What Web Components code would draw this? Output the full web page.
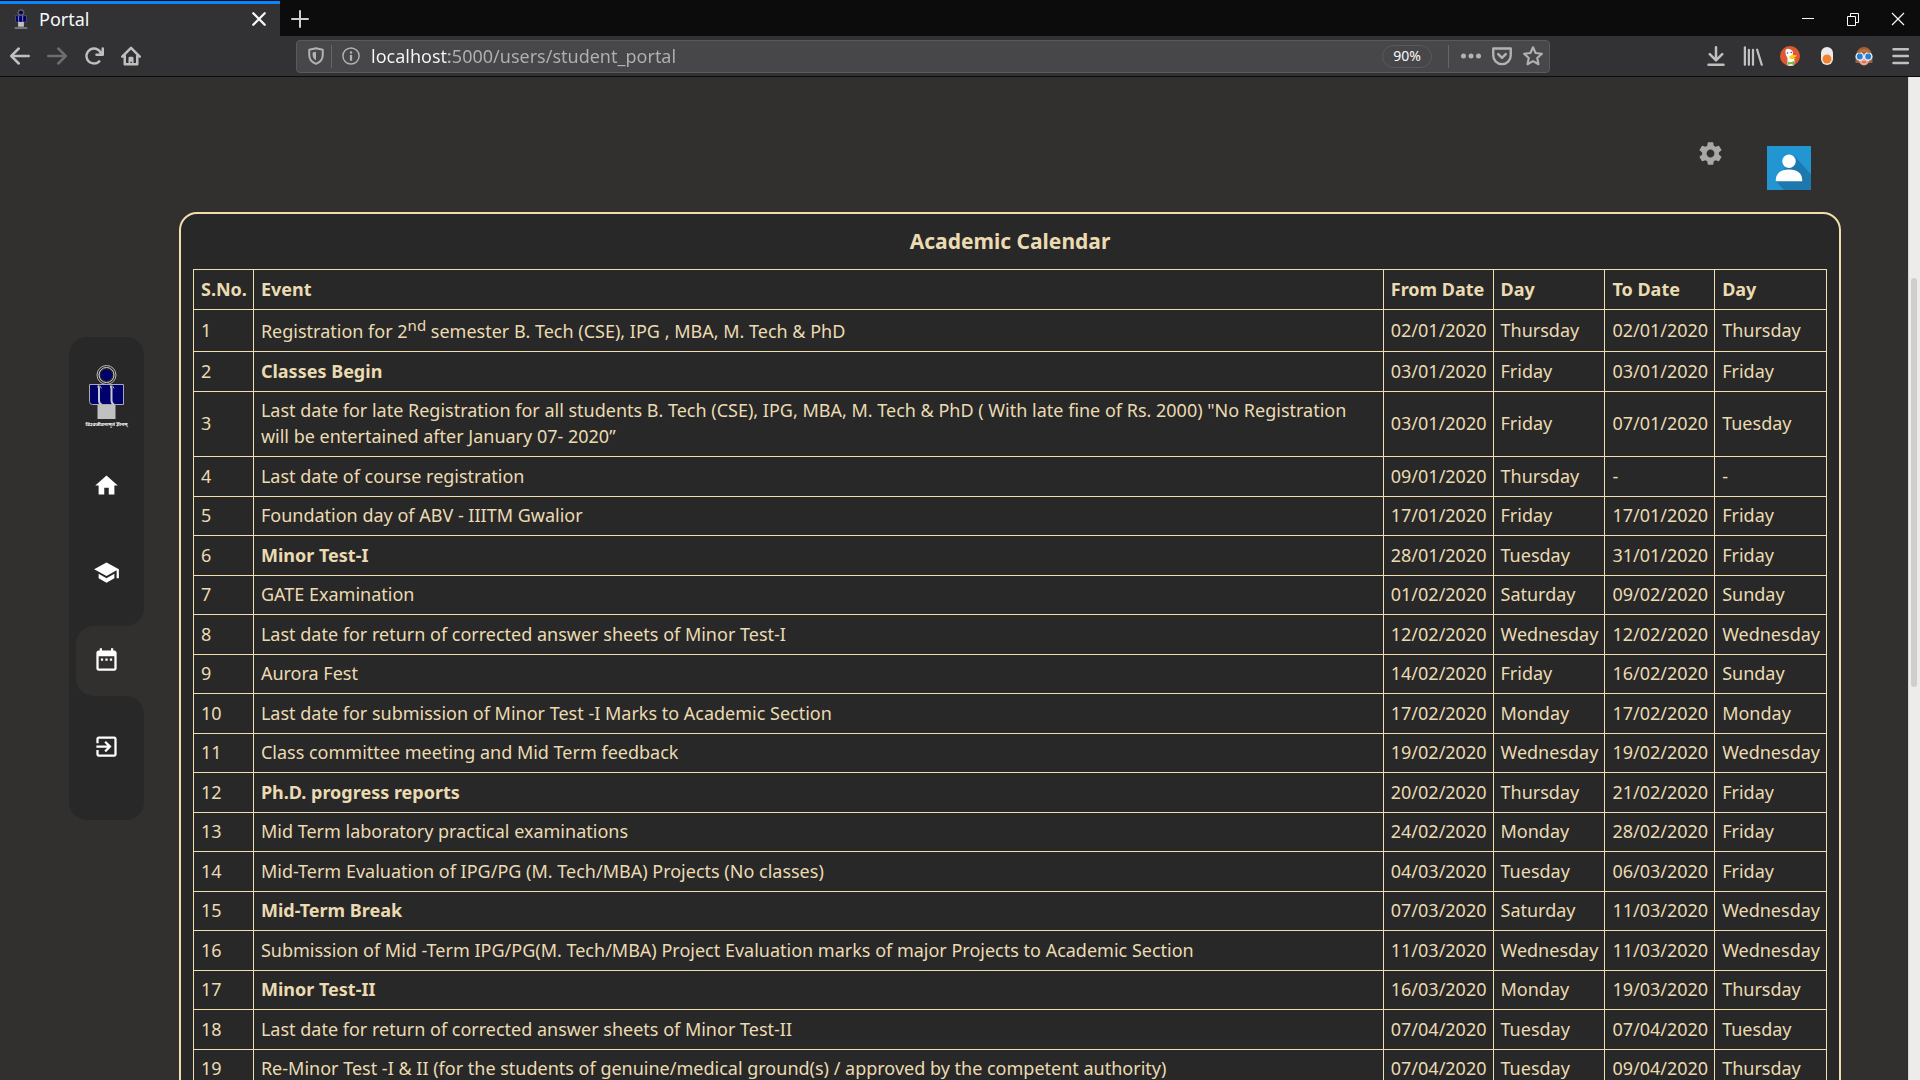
<!DOCTYPE html>
<html lang="en">
<head>
<meta charset="utf-8">
<title>Portal</title>
<style>
  html, body { margin: 0; height: 100%; overflow: hidden; }
  body {
    --page: #32302f; --panel: #282828; --ink: #ebdbb2; --line: #f0deae;
    font-family: "Noto Sans", "Open Sans", sans-serif;
    background: var(--page);
  }
</style>
</head>
<body>
<browser-window>
  <browser-tabs slot="tabs"></browser-tabs>
  <browser-toolbar slot="toolbar"></browser-toolbar>
  <portal-page slot="page">
    <side-nav slot="nav"></side-nav>
    <user-tools slot="tools"></user-tools>
    <academic-calendar slot="content"></academic-calendar>
  </portal-page>
</browser-window>

<script>
const define = (name, html, setup) => customElements.define(name, class extends HTMLElement {
  constructor() {
    super();
    const t = document.createElement('template');
    t.innerHTML = html;
    this.attachShadow({ mode: 'open' }).append(t.content.cloneNode(true));
    if (setup) setup(this.shadowRoot, this);
  }
});

const CREST = `
  <circle cx="20.5" cy="11" r="9.5" fill="#282828" stroke="#b9b9b9" stroke-width="1"/>
  <circle cx="20.5" cy="11" r="7.5" fill="#222" stroke="#d6d6d6" stroke-width="1"/>
  <circle cx="20.5" cy="11" r="5.5" fill="#00006c"/>
  <path d="M11.500 40h18v15h-18z" fill="#c0c0c0"/>
  <path d="M3.500 20.500h34v20h-31q-3 0-3-3z" fill="#00006c" stroke="#a9a9b4" stroke-width="1"/>
  <path d="M11.500 22.500q1.500 0 1.500 2v12q0 3 2.500 4" fill="none" stroke="#c8c8d0" stroke-width="2"/>
  <path d="M24 22.500q1.500 0 1.500 2v12q0 3 2.500 4" fill="none" stroke="#c8c8d0" stroke-width="2"/>
  <path d="M12 21.500q3 0 3.500 3M24.500 21.500q3 0 3.500 3" fill="none" stroke="#a9a9b4" stroke-width="1"/>`;

const ICONS = {
  back: ['0 0 16 16', '<path d="M15 7H3.414l4.293-4.293a1 1 0 0 0-1.414-1.414l-6 6a1 1 0 0 0 0 1.414l6 6a1 1 0 0 0 1.414-1.414L3.414 9H15a1 1 0 0 0 0-2z"/>'],
  forward: ['0 0 16 16', '<path transform="matrix(-1 0 0 1 16 0)" d="M15 7H3.414l4.293-4.293a1 1 0 0 0-1.414-1.414l-6 6a1 1 0 0 0 0 1.414l6 6a1 1 0 0 0 1.414-1.414L3.414 9H15a1 1 0 0 0 0-2z"/>'],
  reload: ['0 0 16 16', '<path d="M15 1a1 1 0 0 0-1 1v2.418A6.995 6.995 0 1 0 8 15a6.954 6.954 0 0 0 4.950-2.050 1 1 0 0 0-1.414-1.414A5.019 5.019 0 1 1 12.549 6H10a1 1 0 0 0 0 2h5a1 1 0 0 0 1-1V2a1 1 0 0 0-1-1z"/>'],
  home: ['0 0 16 16', '<path fill="none" stroke="currentColor" stroke-width="2" stroke-linejoin="round" stroke-linecap="round" d="M1 8.500l7-7 7 7M3 8v6.500h10V8"/><path d="M6 14.500V9.500q0-1 1-1h2q1 0 1 1v5H8.800v-2H7.500v2z"/>'],
  shield: ['0 0 16 16', '<path fill="none" stroke="currentColor" stroke-width="1.800" stroke-linejoin="round" d="M8 1.200L14 2.500V7c0 4-2.500 6.500-6 8-3.500-1.500-6-4-6-8V2.500z"/><path d="M8 4.200v7.500C6 10.500 5 9 5 7V4.800z"/>'],
  info: ['0 0 16 16', '<circle cx="8" cy="8" r="7.200" fill="none" stroke="currentColor" stroke-width="1.300"/><circle cx="8" cy="4.800" r="1.100"/><path d="M7 7h2v5.200H7z"/>'],
  dots: ['0 0 16 16', '<circle cx="2" cy="8" r="2"/><circle cx="8" cy="8" r="2"/><circle cx="14" cy="8" r="2"/>'],
  pocket: ['0 0 16 16', '<path fill="none" stroke="currentColor" stroke-width="1.900" stroke-linejoin="round" d="M1 2h14v5.500a7 7 0 0 1-14 0z"/><path fill="none" stroke="currentColor" stroke-width="2" stroke-linecap="round" stroke-linejoin="round" d="M5 6.500l3 3 3-3"/>'],
  star: ['0 0 16 16', '<path fill="none" stroke="currentColor" stroke-width="1.700" stroke-linejoin="round" d="M8 1l2.100 4.600 5 .6-3.700 3.400 1 5L8 12.100l-4.400 2.500 1-5L.900 6.200l5-.6z"/>'],
  download: ['0 0 16 16', '<path fill="none" stroke="currentColor" stroke-width="2" stroke-linecap="round" stroke-linejoin="round" d="M8 1v10M3 6.500l5 5 5-5M2 15h12"/>'],
  library: ['0 0 16 16', '<path fill="none" stroke="currentColor" stroke-width="1.800" stroke-linecap="round" d="M1.500 1v14M4.700 3v12M8 3v12M11.300 3l3.700 12"/>'],
  duck: ['0 0 20 20', '<circle cx="10" cy="10" r="10" fill="#de5833"/><path d="M5.500 4.500q1-2.500 3.500-1.500 3.500.500 4 3.500l-.5 5q2 1 2 3l-.5 4.800q-3.500 1-6.500.200L7.500 12Q5 9 5.500 4.500z" fill="#fff"/><circle cx="7.500" cy="7" r=".8" fill="#2d4f8e"/><circle cx="11.200" cy="6.500" r=".8" fill="#2d4f8e"/><path d="M9.500 10q3-1.500 7.500-.5-1 1.700-3.500 2l2.500.7q-2.500 1.600-6.500.3z" fill="#fdd20a"/><path d="M8 15.500l2.500 1 3.500-1.500v4l-3.500-1L8 19z" fill="#65bc46"/>'],
  toggle: ['0 0 20 20', '<rect x="4" y="1" width="12" height="18" rx="6" fill="#ececec"/><circle cx="10" cy="13" r="4.500" fill="#f5812e"/>'],
  face: ['0 0 20 20', '<path d="M1.500 17Q1 1 10 1t8.500 16z" fill="#9c6136"/><path d="M5 10h10v5q-1 4-5 4.500Q6 19 5 15z" fill="#f0a58c"/><path d="M8 15.500h4v1.500H8z" fill="#c96a5a"/><circle cx="5.800" cy="10.500" r="3.700" fill="#2a7fd4" stroke="#e6f2ff" stroke-width="1.400"/><circle cx="14.200" cy="10.500" r="3.700" fill="#2a7fd4" stroke="#e6f2ff" stroke-width="1.400"/><path d="M3 6q7-6 14 0l-1 1.500q-6-3-12 0z" fill="#b5713d"/>'],
  menu: ['0 0 16 16', '<path fill="none" stroke="currentColor" stroke-width="2" stroke-linecap="round" d="M2 2.500h11.500M2 8h11.500M2 13.500h11.500"/>'],
  plus: ['0 0 18 18', '<path fill="none" stroke="currentColor" stroke-width="2" stroke-linecap="round" d="M9 1v16M1 9h16"/>'],
  cross: ['0 0 14 14', '<path fill="none" stroke="currentColor" stroke-width="2" stroke-linecap="round" d="M2 2l10 10M12 2L2 12"/>'],
  wmin: ['0 0 14 14', '<path d="M1 6h12v1H1z"/>'],
  wmax: ['0 0 14 14', '<path fill="none" stroke="currentColor" d="M1.500 4.500h8v9h-8zM4.500 4.500v-3h8v9h-3"/>'],
  wclose: ['0 0 14 14', '<path fill="none" stroke="currentColor" stroke-width="1.200" d="M1 1l12 12M13 1L1 13"/>'],
  mhome: ['0 0 24 24', '<path d="M10 20v-6h4v6h5v-8h3L12 3 2 12h3v8z"/>'],
  mschool: ['0 0 24 24', '<path d="M5 13.180v4L12 21l7-3.820v-4L12 17l-7-3.820zM12 3L1 9l11 6 9-4.910V17h2V9L12 3z"/>'],
  mdate: ['0 0 24 24', '<path d="M9 11H7v2h2v-2zm4 0h-2v2h2v-2zm4 0h-2v2h2v-2zm2-7h-1V2h-2v2H8V2H6v2H5c-1.110 0-1.990.9-1.990 2L3 20c0 1.100.89 2 2 2h14c1.100 0 2-.9 2-2V6c0-1.100-.9-2-2-2zm0 16H5V9h14v11z"/>'],
  mexit: ['0 0 24 24', '<path d="M10.090 15.590L11.500 17l5-5-5-5-1.410 1.410L12.670 11H3v2h9.670l-2.580 2.590zM19 3H5c-1.110 0-2 .9-2 2v4h2V5h14v14H5v-4H3v4c0 1.100.89 2 2 2h14c1.100 0 2-.9 2-2V5c0-1.100-.9-2-2-2z"/>'],
  mgear: ['0 0 24 24', '<path d="M19.430 12.980c.04-.32.07-.64.07-.98s-.03-.66-.07-.98l2.110-1.650c.19-.15.24-.42.12-.64l-2-3.460c-.12-.22-.39-.3-.61-.22l-2.490 1c-.52-.4-1.080-.73-1.690-.98l-.38-2.650C14.460 2.180 14.250 2 14 2h-4c-.25 0-.46.180-.49.42l-.38 2.650c-.61.250-1.170.590-1.690.980l-2.490-1c-.23-.09-.49 0-.61.220l-2 3.460c-.13.220-.07.490.12.640l2.110 1.650c-.04.320-.07.650-.07.980s.03.660.07.980l-2.110 1.650c-.19.150-.24.420-.12.640l2 3.460c.12.220.39.300.61.220l2.490-1c.52.400 1.080.730 1.690.980l.38 2.650c.03.240.24.420.49.420h4c.25 0 .46-.18.49-.42l.38-2.650c.61-.25 1.170-.59 1.690-.98l2.490 1c.23.090.49 0 .61-.22l2-3.460c.12-.22.07-.49-.12-.64l-2.110-1.650zM12 15.500c-1.930 0-3.500-1.570-3.500-3.500s1.570-3.500 3.500-3.500 3.500 1.570 3.500 3.500-1.570 3.500-3.500 3.500z"/>'],
  crest: ['0 0 41 56', CREST],
  crestmini: ['0 0 41 62', CREST + '<path d="M1 59h39" stroke="#bbb" stroke-width="3" fill="none"/>'],
  avatar: ['0 0 44 44', '<path fill="#2196d3" d="M0 0h44v44H0z"/><path fill="#1c78ad" d="M27 9.500L44 28.500V44H17L9 35z"/><circle cx="22" cy="15.200" r="6.700" fill="#fff"/><path fill="#fff" d="M8.700 35.200Q8.700 23.500 22 23.500t13.300 11.700z"/>']
};

customElements.define('ui-icon', class extends HTMLElement {
  static observedAttributes = ['name'];
  constructor() { super(); this.attachShadow({ mode: 'open' }); }
  attributeChangedCallback() {
    const [box, body] = ICONS[this.getAttribute('name')];
    this.shadowRoot.innerHTML = `<style>
      :host { display: block; flex: none; width: 20px; height: 20px; }
      svg { display: block; width: 100%; height: 100%; fill: currentColor; }
    </style><svg viewBox="${box}" aria-hidden="true">${body}</svg>`;
  }
});

define('browser-window', `<style>
  :host { display: flex; flex-direction: column; height: 100vh; }
  .page { flex: 1; min-height: 0; display: flex; }
  ::slotted([slot=page]) { flex: 1; min-width: 0; }
</style>
<slot name="tabs"></slot><slot name="toolbar"></slot><div class="page"><slot name="page"></slot></div>`);

define('browser-tabs', `<style>
  :host { display: flex; height: 36px; background: #0c0c0d; color: #f9f9fa; box-sizing: border-box; padding-top: 1px; }
  button { all: unset; display: flex; align-items: center; justify-content: center; }
  .tab { display: flex; align-items: center; width: 280px; box-sizing: border-box; border-top: 3px solid #0a84ff; background: #323234; padding: 0 13px 3px 11px; font-size: 18px; line-height: 28px; }
  .tab ui-icon { width: 20px; height: 20px; }
  .tab span { flex: 1; padding-left: 8px; }
  .tab button ui-icon { width: 16px; height: 16px; }
  .new { width: 40px; color: #d0d0d2; }
  .new ui-icon { width: 18px; height: 18px; }
  .win { margin-left: auto; display: flex; }
  .win button { width: 45px; }
  .win ui-icon { width: 14px; height: 14px; }
</style>
<div class="tab"><ui-icon name="crestmini"></ui-icon><span>Portal</span><button aria-label="Close tab"><ui-icon name="cross"></ui-icon></button></div>
<button class="new" aria-label="New tab"><ui-icon name="plus"></ui-icon></button>
<div class="win">
  <button aria-label="Minimize"><ui-icon name="wmin"></ui-icon></button>
  <button aria-label="Restore"><ui-icon name="wmax"></ui-icon></button>
  <button aria-label="Close"><ui-icon name="wclose"></ui-icon></button>
</div>`);

define('browser-toolbar', `<style>
  :host { display: flex; align-items: center; height: 41px; box-sizing: border-box; border-bottom: 1px solid #0c0c0d; background: #323234; color: #bfbfc0; padding: 0 1px; }
  button { all: unset; display: flex; align-items: center; justify-content: center; width: 37px; height: 36px; }
  button[disabled] { color: #6d6d6f; }
  .group { display: flex; }
  .url { flex: 1; display: flex; align-items: center; height: 33px; box-sizing: border-box; margin: 0 147px; border: 1px solid #5a5a5c; border-radius: 4px; background: #474749; color: #b2b2b4; padding: 0 1px 0 3px; }
  .url button { width: 31px; height: 31px; }
  .url .id { width: 37px; }
  .url ui-icon { width: 18px; height: 18px; }
  .url .page ui-icon { width: 20px; height: 20px; }
  .sep { width: 1px; height: 23px; background: #66666a; }
  input { all: unset; flex: 1; min-width: 0; font-size: 18px; line-height: 30px; margin-left: 2px; color: #f9f9fa;
    background: linear-gradient(90deg, #f9f9fa 78px, #b1b1b3 78px); -webkit-background-clip: text; background-clip: text; -webkit-text-fill-color: transparent; }
  .url .zoom { width: 48px; height: 21px; border: 1px solid #5a5a5c; border-radius: 12px; font-size: 14px; line-height: 20px; color: #f9f9fa; margin-right: 16px; }
  .page { margin-left: 6px; }
</style>
<div class="group">
  <button aria-label="Back"><ui-icon name="back"></ui-icon></button>
  <button aria-label="Forward" disabled><ui-icon name="forward"></ui-icon></button>
  <button aria-label="Reload"><ui-icon name="reload"></ui-icon></button>
  <button aria-label="Home"><ui-icon name="home"></ui-icon></button>
</div>
<div class="url">
  <button aria-label="Tracking protection"><ui-icon name="shield"></ui-icon></button><span class="sep"></span>
  <button class="id" aria-label="Site information"><ui-icon name="info"></ui-icon></button>
  <input type="text" aria-label="Address" value="localhost:5000/users/student_portal">
  <button class="zoom">90%</button><span class="sep"></span>
  <div class="group page">
    <button aria-label="Page actions"><ui-icon name="dots"></ui-icon></button>
    <button aria-label="Save to Pocket"><ui-icon name="pocket"></ui-icon></button>
    <button aria-label="Bookmark"><ui-icon name="star"></ui-icon></button>
  </div>
</div>
<div class="group">
  <button aria-label="Downloads"><ui-icon name="download"></ui-icon></button>
  <button aria-label="Library"><ui-icon name="library"></ui-icon></button>
  <button aria-label="Privacy"><ui-icon name="duck"></ui-icon></button>
  <button aria-label="Toggle"><ui-icon name="toggle"></ui-icon></button>
  <button aria-label="Profile"><ui-icon name="face"></ui-icon></button>
  <button aria-label="Menu"><ui-icon name="menu"></ui-icon></button>
</div>`);

define('portal-page', `<style>
  :host { display: flex; overflow: hidden; background: var(--page); color: var(--ink); }
  ::slotted([slot=nav]) { align-self: center; margin-left: 69px; }
  main { flex: 1; min-width: 0; margin: 0 67px 0 35px; }
  .scroll { flex: none; width: 12px; box-sizing: border-box; border-left: 1px solid #d9d7d6; background: #eeecea; padding: 201px 3px 0 2px; }
  .thumb { height: 51%; border-radius: 3px; background: #cecece; }
</style>
<slot name="nav"></slot>
<main><slot name="tools"></slot><slot name="content"></slot></main>
<div class="scroll"><div class="thumb"></div></div>`);

define('side-nav', `<style>
  :host { display: block; flex: none; width: 75px; box-sizing: border-box; border-radius: 18px; background: var(--panel); color: #fff; padding: 27px 0 37px; }
  .logo { display: flex; flex-direction: column; align-items: center; height: 88px; color: #fff; font-size: 5px; font-weight: 700; line-height: 8px; white-space: nowrap; }
  .logo ui-icon { width: 41px; height: 56px; }
  nav { display: flex; flex-direction: column; gap: 17px; }
  a { position: relative; display: flex; align-items: center; justify-content: center; height: 70px; box-sizing: border-box; padding-bottom: 4px; color: inherit; }
  a ui-icon { width: 27px; height: 27px; }
  a.on { margin-left: 7px; padding-right: 7px; border-radius: 18px 0 0 18px; background: var(--page); }
  a.on::before, a.on::after { content: ""; position: absolute; right: 0; width: 18px; height: 18px; }
  a.on::before { bottom: 100%; background: radial-gradient(circle at 0 0, transparent 18px, var(--page) 18px); }
  a.on::after { top: 100%; background: radial-gradient(circle at 0 100%, transparent 18px, var(--page) 18px); }
</style>
<div class="logo"><ui-icon name="crest"></ui-icon><span>विश्वजीवनामृतं ज्ञानम्</span></div>
<nav>
  <a href="#home" aria-label="Home"><ui-icon name="mhome"></ui-icon></a>
  <a href="#courses" aria-label="Courses"><ui-icon name="mschool"></ui-icon></a>
  <a href="#calendar" aria-label="Calendar" class="on"><ui-icon name="mdate"></ui-icon></a>
  <a href="#logout" aria-label="Log out"><ui-icon name="mexit"></ui-icon></a>
</nav>`);

define('user-tools', `<style>
  :host { display: flex; justify-content: flex-end; align-items: flex-start; gap: 43px; padding: 63px 30px 22px 0; }
  button { all: unset; color: #a8a8a8; }
  button ui-icon { width: 27px; height: 27px; }
  a { display: block; padding-top: 6px; }
  a ui-icon { width: 44px; height: 44px; }
</style>
<button aria-label="Settings"><ui-icon name="mgear"></ui-icon></button>
<a href="#profile" aria-label="Profile"><ui-icon name="avatar"></ui-icon></a>`);

const EVENTS = [
  ['Registration for 2<sup>nd</sup> semester B. Tech (CSE), IPG , MBA, M. Tech &amp; PhD', '02/01/2020', 'Thursday', '02/01/2020', 'Thursday'],
  ['<b>Classes Begin</b>', '03/01/2020', 'Friday', '03/01/2020', 'Friday'],
  ['Last date for late Registration for all students B. Tech (CSE), IPG, MBA, M. Tech &amp; PhD ( With late fine of Rs. 2000) "No Registration will be entertained after January 07- 2020”', '03/01/2020', 'Friday', '07/01/2020', 'Tuesday'],
  ['Last date of course registration', '09/01/2020', 'Thursday', '-', '-'],
  ['Foundation day of ABV - IIITM Gwalior', '17/01/2020', 'Friday', '17/01/2020', 'Friday'],
  ['<b>Minor Test-I</b>', '28/01/2020', 'Tuesday', '31/01/2020', 'Friday'],
  ['GATE Examination', '01/02/2020', 'Saturday', '09/02/2020', 'Sunday'],
  ['Last date for return of corrected answer sheets of Minor Test-I', '12/02/2020', 'Wednesday', '12/02/2020', 'Wednesday'],
  ['Aurora Fest', '14/02/2020', 'Friday', '16/02/2020', 'Sunday'],
  ['Last date for submission of Minor Test -I Marks to Academic Section', '17/02/2020', 'Monday', '17/02/2020', 'Monday'],
  ['Class committee meeting and Mid Term feedback', '19/02/2020', 'Wednesday', '19/02/2020', 'Wednesday'],
  ['<b>Ph.D. progress reports</b>', '20/02/2020', 'Thursday', '21/02/2020', 'Friday'],
  ['Mid Term laboratory practical examinations', '24/02/2020', 'Monday', '28/02/2020', 'Friday'],
  ['Mid-Term Evaluation of IPG/PG (M. Tech/MBA) Projects (No classes)', '04/03/2020', 'Tuesday', '06/03/2020', 'Friday'],
  ['<b>Mid-Term Break</b>', '07/03/2020', 'Saturday', '11/03/2020', 'Wednesday'],
  ['Submission of Mid -Term IPG/PG(M. Tech/MBA) Project Evaluation marks of major Projects to Academic Section', '11/03/2020', 'Wednesday', '11/03/2020', 'Wednesday'],
  ['<b>Minor Test-II</b>', '16/03/2020', 'Monday', '19/03/2020', 'Thursday'],
  ['Last date for return of corrected answer sheets of Minor Test-II', '07/04/2020', 'Tuesday', '07/04/2020', 'Tuesday'],
  ['Re-Minor Test -I &amp; II (for the students of genuine/medical ground(s) / approved by the competent authority)', '07/04/2020', 'Tuesday', '09/04/2020', 'Thursday']
];

define('academic-calendar', `<style>
  :host { display: block; border: 2px solid var(--line); border-radius: 18px; background: var(--panel); padding: 0 12px 12px; }
  h2 { margin: 0; font-size: 21px; line-height: 55px; text-align: center; }
  table { width: 100%; border-collapse: collapse; font-size: 18px; line-height: 26px; }
  th, td { border: 1px solid var(--line); padding: 5px 6px 7px 7px; text-align: left; white-space: nowrap; }
  th:nth-child(2), td:nth-child(2) { width: 100%; white-space: normal; padding-right: 12px; }
  thead tr, tbody tr:nth-child(even) { height: 40px; }
  sup { font-size: 15px; line-height: 20px; }
</style>
<h2>Academic Calendar</h2>
<table>
  <thead><tr><th>S.No.</th><th>Event</th><th>From Date</th><th>Day</th><th>To Date</th><th>Day</th></tr></thead>
  <tbody></tbody>
</table>`, root => {
  root.querySelector('tbody').innerHTML = EVENTS
    .map((row, i) => `<tr><td>${i + 1}</td>${row.map(c => `<td>${c}</td>`).join('')}</tr>`).join('');
});
</script>
</body>
</html>
